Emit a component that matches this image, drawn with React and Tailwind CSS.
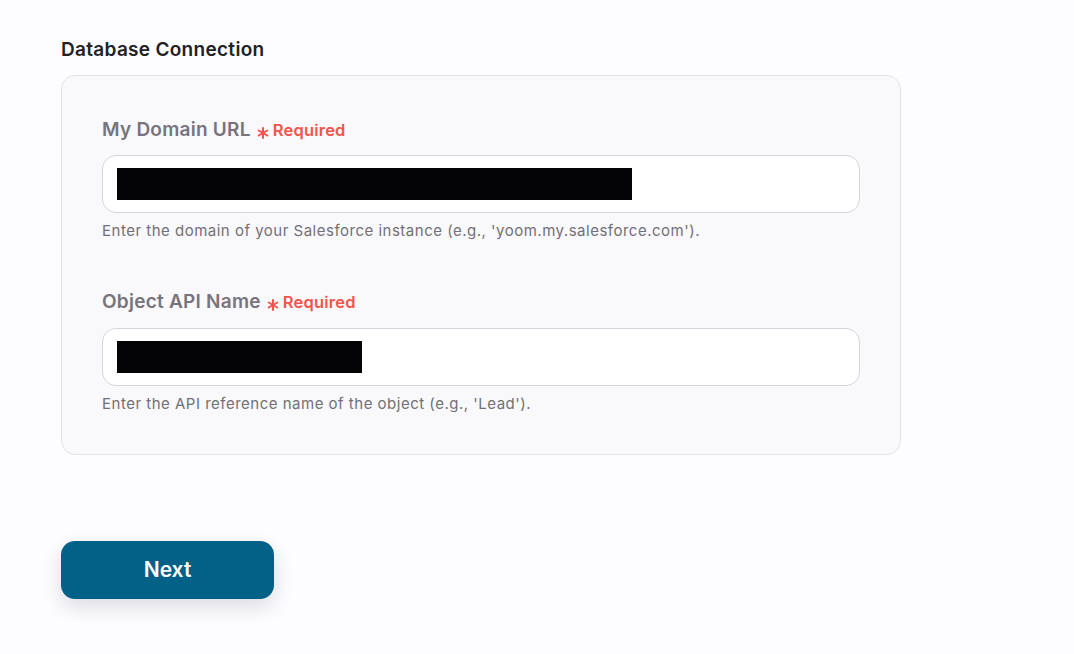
import React from "react";

const Field = ({ label, help, barWidth }) => (
  <div className="flex flex-col">
    <div className="flex items-center gap-[6px] h-[24px]">
      <span className="text-[19px] font-semibold text-[#77747c] tracking-[0.25px]">{label}</span>
      <span className="flex items-center gap-[4px] text-[#f2554b] font-semibold text-[16.5px] tracking-[0.2px]">
        <svg width="12" height="12" viewBox="0 0 12 12" className="mt-[5px]">
          <g stroke="#f2554b" strokeWidth="2" strokeLinecap="round">
            <line x1="6" y1="1" x2="6" y2="11" />
            <line x1="1.7" y1="3.5" x2="10.3" y2="8.5" />
            <line x1="1.7" y1="8.5" x2="10.3" y2="3.5" />
          </g>
        </svg>
        Required
      </span>
    </div>
    <div className="mt-[13px] h-[58px] rounded-[14px] border border-[#d6d5dd] bg-white flex items-center px-[14px]">
      <div className="h-[32px] bg-[#040306]" style={{ width: barWidth }} />
    </div>
    <p className="mt-[7px] text-[15px] text-[#717077] tracking-[0.5px]">{help}</p>
  </div>
);

const App = () => (
  <div
    className="min-h-screen w-full bg-[#fdfcfe] pt-[38px] pl-[61px]"
    style={{ fontFamily: "Inter, 'Noto Sans', sans-serif" }}
  >
    <h2 className="text-[19px] font-semibold text-[#222124] leading-[24px] tracking-[0.3px]">
      Database Connection
    </h2>
    <div className="mt-[13px] w-[840px] rounded-[14px] border border-[#e3e2e8] bg-[#f9f8fb] pl-[40px] pr-[40px] pt-[42px] pb-[39px] flex flex-col gap-[48px]">
      <Field
        label="My Domain URL"
        help="Enter the domain of your Salesforce instance (e.g., 'yoom.my.salesforce.com')."
        barWidth={515}
      />
      <Field
        label="Object API Name"
        help="Enter the API reference name of the object (e.g., 'Lead')."
        barWidth={245}
      />
    </div>
    <button className="mt-[86px] w-[213px] h-[58px] rounded-[14px] bg-[#036087] text-white text-[21px] font-semibold shadow-[0_8px_20px_rgba(30,40,80,0.15)]">
      Next
    </button>
  </div>
);

export default App;
